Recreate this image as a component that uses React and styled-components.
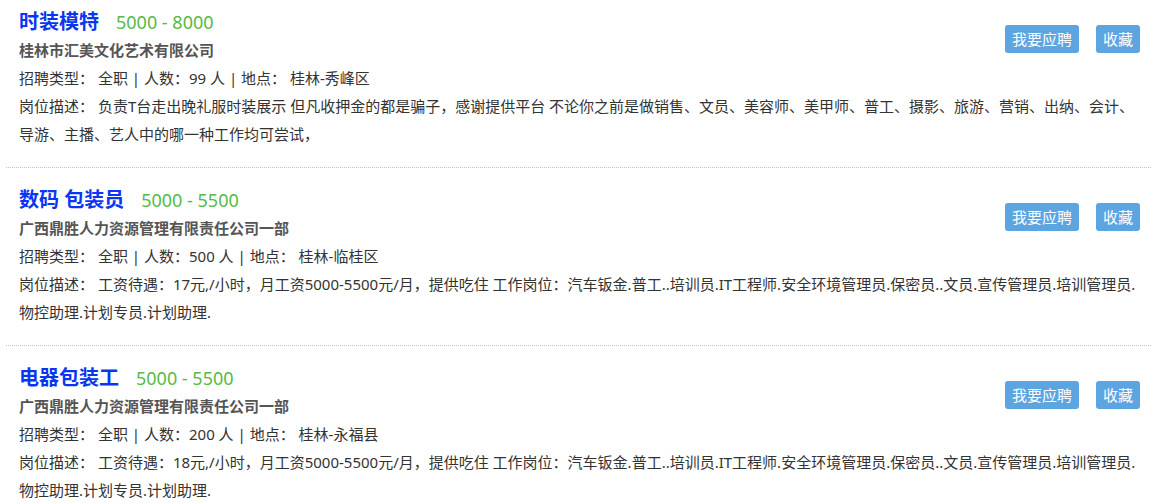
import React from "react";
import styled, { createGlobalStyle } from "styled-components";

const GlobalStyle = createGlobalStyle`
  html, body {
    margin: 0;
    padding: 0;
    background: #ffffff;
  }
  body {
    font-family: "Noto Sans", "Noto Sans CJK SC", sans-serif;
    color: #333333;
  }
`;

const List = styled.div`
  display: flex;
  flex-direction: column;
  margin: 0 1px 0 6px;
`;

const Item = styled.div`
  display: flex;
  align-items: flex-start;
  padding: 18px 11px 19px 13px;
  border-bottom: 1px dotted #c4c4c4;

  &:first-child {
    padding-top: 8px;
  }
`;

const Info = styled.div`
  flex: 1;
  min-width: 0;
  display: flex;
  flex-direction: column;
`;

const TitleRow = styled.div`
  display: flex;
  align-items: baseline;
  gap: 17px;
  height: 28px;
  line-height: 28px;
`;

const Title = styled.a`
  font-size: 20px;
  font-weight: 700;
  color: #0a36f2;
  text-decoration: none;
`;

const Salary = styled.span`
  font-size: 18px;
  color: #55bb44;
`;

const Company = styled.div`
  font-size: 15px;
  font-weight: 700;
  line-height: 28px;
  color: #555555;
`;

const Line = styled.div`
  font-size: 15px;
  line-height: 28px;
  color: #333333;
  white-space: nowrap;
`;

const Actions = styled.div`
  flex: none;
  display: flex;
  gap: 17px;
  margin-top: 17px;
`;

const Button = styled.button`
  height: 28px;
  padding: 0 7px;
  border: none;
  border-radius: 3px;
  background: #5ca5e1;
  color: #ffffff;
  font-family: "Noto Sans CJK SC", sans-serif;
  font-size: 15px;
  line-height: 28px;
  cursor: pointer;
`;

const jobs = [
  {
    title: "时装模特",
    salary: "5000 - 8000",
    company: "桂林市汇美文化艺术有限公司",
    meta: "招聘类型： 全职 | 人数：99 人 | 地点： 桂林-秀峰区",
    desc: [
      "岗位描述： 负责T台走出晚礼服时装展示 但凡收押金的都是骗子，感谢提供平台 不论你之前是做销售、文员、美容师、美甲师、普工、摄影、旅游、营销、出纳、会计、",
      "导游、主播、艺人中的哪一种工作均可尝试，",
    ],
  },
  {
    title: "数码 包装员",
    salary: "5000 - 5500",
    company: "广西鼎胜人力资源管理有限责任公司一部",
    meta: "招聘类型： 全职 | 人数：500 人 | 地点： 桂林-临桂区",
    desc: [
      "岗位描述： 工资待遇：17元,/小时，月工资5000-5500元/月，提供吃住 工作岗位：汽车钣金.普工..培训员.IT工程师.安全环境管理员.保密员..文员.宣传管理员.培训管理员.",
      "物控助理.计划专员.计划助理.",
    ],
  },
  {
    title: "电器包装工",
    salary: "5000 - 5500",
    company: "广西鼎胜人力资源管理有限责任公司一部",
    meta: "招聘类型： 全职 | 人数：200 人 | 地点： 桂林-永福县",
    desc: [
      "岗位描述： 工资待遇：18元,/小时，月工资5000-5500元/月，提供吃住 工作岗位：汽车钣金.普工..培训员.IT工程师.安全环境管理员.保密员..文员.宣传管理员.培训管理员.",
      "物控助理.计划专员.计划助理.",
    ],
  },
];

export default function App() {
  return (
    <>
      <GlobalStyle />
      <List>
        {jobs.map((job) => (
          <Item key={job.title}>
            <Info>
              <TitleRow>
                <Title href="#">{job.title}</Title>
                <Salary>{job.salary}</Salary>
              </TitleRow>
              <Company>{job.company}</Company>
              <Line>{job.meta}</Line>
              {job.desc.map((d, i) => (
                <Line key={i}>{d}</Line>
              ))}
            </Info>
            <Actions>
              <Button>我要应聘</Button>
              <Button>收藏</Button>
            </Actions>
          </Item>
        ))}
      </List>
    </>
  );
}
